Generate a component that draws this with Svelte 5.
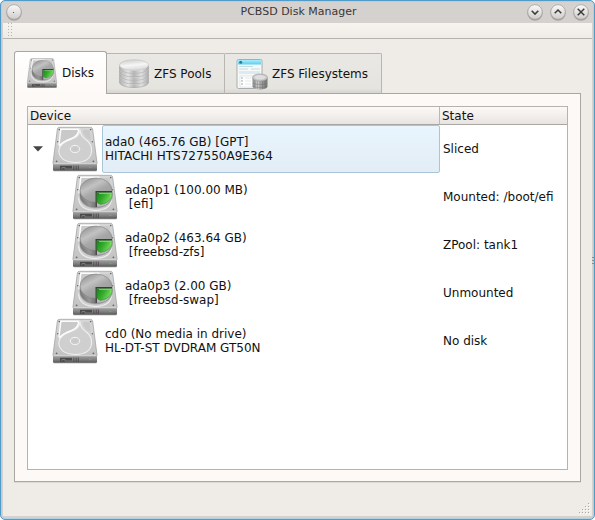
<script>
  const rows = [
    { name: 'ada0 (465.76 GB) [GPT]', detail: 'HITACHI HTS727550A9E364', state: 'Sliced', selected: true, open: true },
    { name: 'ada0p1 (100.00 MB)', detail: '\u00a0[efi]', state: 'Mounted: /boot/efi', child: true },
    { name: 'ada0p2 (463.64 GB)', detail: '\u00a0[freebsd-zfs]', state: 'ZPool: tank1', child: true },
    { name: 'ada0p3 (2.00 GB)', detail: '\u00a0[freebsd-swap]', state: 'Unmounted', child: true },
    { name: 'cd0 (No media in drive)', detail: 'HL-DT-ST DVDRAM GT50N', state: 'No disk' }
  ];
</script>

{#snippet drive(size, pie)}
  <svg width={size} height={size} viewBox="0 0 48 48">
    <path d="M2 39h44v6q0 1.500-1.500 1.500h-41Q2 46.500 2 45z" fill="#555" opacity=".35" />
    <path d="M8.500 2.300h31q1.800 0 2.100 1.700L46 37.500v1.500H2v-1.500L6.400 4q.3-1.700 2.100-1.700z" fill="url(#metal)" stroke="#9c9c9c" stroke-width=".7" />
    <path d="M2 38.800h44v5.700q0 1.300-1.300 1.300H3.300Q2 45.800 2 44.500z" fill="url(#front)" />
    <path d="M2.300 38.700h43.400" stroke="#eee" stroke-width=".7" />
    <path d="M9 40.800h12v4H9z" fill="#4a4a4a" />
    <path d="M11 44v-1.500h3V44h7" fill="none" stroke="#858585" stroke-width=".8" />
    <path d="M22.800 40.500v4.500M25.200 40.500v4.500M27.300 40.500v4.500" stroke="#4a4a4a" stroke-width=".9" />
    <path d="M38 42.500h2.600" stroke="#35d02a" stroke-width="1.200" />
    <path d="M29 4.500q0 6.500 7 11 5 4 4.500 11-1 10.500-15.500 11-16 0-17.300-11.500Q8 18 20 14.500q9-3 9-10" fill="#cfcfcf" stroke="#f0f0f0" stroke-width="1.100" />
    <path d="M9.800 4.300h17.700q.5 6.300-7 9.200-8 2.700-11.700 7l-.8-1z" fill="#c9c9c9" stroke="#fbfbfb" stroke-width="1.500" />
    <path d="M31 4.500h8l1.500 12q-9-5-9.500-12" fill="#c9c9c9" stroke="#dedede" stroke-width=".4" />
    <ellipse cx="24" cy="24" rx="4.800" ry="3.700" fill="#cecece" stroke="#f4f4f4" />
    <ellipse cx="24" cy="24" rx="2.500" ry="1.700" fill="#c8c8c8" />
    <g fill="#666">
      <circle cx="8.300" cy="4.600" r=".8" /><circle cx="39.700" cy="4.600" r=".8" />
      <circle cx="6.700" cy="16.800" r=".7" /><circle cx="41.300" cy="16.800" r=".7" />
      <circle cx="5.600" cy="36.300" r=".9" /><circle cx="42.400" cy="36.300" r=".9" />
    </g>
    {#if pie}
      <ellipse cx="25" cy="22.500" rx="16.800" ry="13" fill="#777" opacity=".4" />
      <path d="M9 17.500v4.500c0 7.500 7 12.300 16 12.300S41 29.500 41 22v-4.500z" fill="url(#side)" stroke="#777" stroke-width=".4" />
      <ellipse cx="25" cy="17.300" rx="16" ry="12.300" fill="url(#disc)" stroke="#808080" stroke-width=".6" />
      <path d="M24.700 29v5.500Q13.500 34 10 25q5 5 14.700 4z" fill="#666" opacity=".25" />
      <path d="M24.700 18.500h16.400v3.700q-.5 5.500-6 9-4.500 2.500-10.400 2.800z" fill="#b9b9b9" />
      <path d="M24.500 18h16.500v1.500H25.900v14.500h-1.400z" fill="#3c3c3c" />
      <path d="M25.800 19.800h15.300q.3 5-2.800 7.700-4 3.500-8.500 3.900-2.500-.6-4-2.300z" fill="url(#green)" stroke="#238a1c" stroke-width=".5" />
      <path d="M28 20.500h12.200q.1 2-.6 3.800" fill="none" stroke="#91e682" stroke-width=".7" />
    {/if}
  </svg>
{/snippet}

{#snippet ball(kind)}
  <svg width="18" height="18" viewBox="0 0 18 18">
    <circle cx="9" cy="10" r="7.700" fill="#918e8b" opacity=".65" />
    <circle cx="9" cy="9" r="7.300" fill="url(#ball)" stroke="#a09d9a" stroke-width=".7" />
    {#if kind === 'menu'}
      <rect x="8" y="9" width="1" height="1" fill="#555" />
    {:else}
      <path
        d={kind === 'min' ? 'M5.700 7.800l3.300 3.300 3.300-3.300' : kind === 'max' ? 'M5.700 10.300l3.300-3.300 3.300 3.300' : 'M5.700 5.700l6.600 6.600M12.300 5.700l-6.600 6.600'}
        fill="none" stroke="#3c3b3a" stroke-width="1.500" />
    {/if}
  </svg>
{/snippet}

<div class="window">
  <svg class="defs" width="0" height="0">
    <defs>
      <linearGradient id="metal" x2="0" y2="1"><stop stop-color="#d6d6d6" /><stop offset=".5" stop-color="#cdcdcd" /><stop offset="1" stop-color="#c2c2c2" /></linearGradient>
      <linearGradient id="front" x2="0" y2="1"><stop stop-color="#a2a2a2" /><stop offset=".6" stop-color="#7c7c7c" /><stop offset="1" stop-color="#555" /></linearGradient>
      <linearGradient id="side"><stop stop-color="#777" /><stop offset=".3" stop-color="#a8a8a8" /><stop offset=".5" stop-color="#757575" /><stop offset=".8" stop-color="#c5c5c5" /><stop offset="1" stop-color="#888" /></linearGradient>
      <linearGradient id="disc" x2=".7" y2="1"><stop stop-color="#858585" /><stop offset=".4" stop-color="#c2c2c2" /><stop offset=".6" stop-color="#a8a8a8" /><stop offset="1" stop-color="#999" /></linearGradient>
      <linearGradient id="green" y2=".4"><stop stop-color="#16861a" /><stop offset=".5" stop-color="#36ad2d" /><stop offset="1" stop-color="#7add62" /></linearGradient>
      <linearGradient id="ball" x2="0" y2="1"><stop stop-color="#fafafa" /><stop offset="1" stop-color="#cfcccb" /></linearGradient>
      <linearGradient id="pool"><stop stop-color="#b0b0b0" /><stop offset=".3" stop-color="#e3e3e3" /><stop offset=".5" stop-color="#b5b5b5" /><stop offset=".75" stop-color="#e0e0e0" /><stop offset="1" stop-color="#ababab" /></linearGradient>
      <linearGradient id="lid" x2=".3" y2="1"><stop stop-color="#c8c8c8" /><stop offset=".6" stop-color="#f6f6f6" /><stop offset="1" stop-color="#dcdcdc" /></linearGradient>
      <linearGradient id="can"><stop stop-color="#888" /><stop offset=".35" stop-color="#d0d0d0" /><stop offset=".65" stop-color="#999" /><stop offset="1" stop-color="#777" /></linearGradient>
      <linearGradient id="sky" x2="0" y2="1"><stop stop-color="#a9edfb" /><stop offset="1" stop-color="#54cfee" /></linearGradient>
    </defs>
  </svg>

  <header class="title">
    {@render ball('menu')}
    <span>PCBSD Disk Manager</span>
    <div class="controls">{@render ball('min')}{@render ball('max')}{@render ball('close')}</div>
  </header>

  <div class="body">
    <div class="toolbar"><i class="grip"></i></div>

    <nav class="tabs">
      <div class="tab active">{@render drive(32, true)}<span>Disks</span></div>
      <div class="tab">
        <svg width="32" height="32" viewBox="0 0 32 32">
          {#each [22, 18.500, 15, 11.500, 8] as y}
            <path d="M1.500 {y - 1}v3c0 3.300 6 5.500 14.500 5.500s14.500-2.200 14.500-5.500v-3z" fill="url(#pool)" stroke="#999" stroke-width=".5" />
            <path d="M1.800 {y - 1}c0 3 6 5 14.200 5s14.200-2 14.200-5" fill="none" stroke="#f4f4f4" stroke-width=".9" />
          {/each}
          <ellipse cx="16" cy="7" rx="14.500" ry="5.300" fill="url(#lid)" stroke="#b9b9b9" stroke-width=".5" />
        </svg>
        <span>ZFS Pools</span>
      </div>
      <div class="tab last">
        <svg width="32" height="32" viewBox="0 0 32 32">
          <rect x="1" y="1.500" width="25" height="29" rx="1.500" fill="#f7f8f8" stroke="#a1a5a6" stroke-width=".9" />
          <path d="M2 2h23v4.500H2z" fill="url(#sky)" />
          <circle cx="4.700" cy="4.300" r="1.500" fill="#257f98" />
          <path d="M3 8.500h14M3 11h9M15 11h9" stroke="#c4dde4" stroke-width="1" />
          <path d="M3 13h21v3H3z" fill="#dcebf1" />
          <path d="M4 18h20v11H4z" fill="#fff" stroke="#d5d9da" stroke-width=".6" />
          <path d="M5 20h2M5 23h2M5 26h2" stroke="#c2c6c8" stroke-width="1.500" />
          <path d="M9 20h6M9 23h6M9 26h6" stroke="#e4e6e7" stroke-width="1" />
          <path d="M16.500 20v8.500c0 4 15 4 15 0V20z" fill="url(#can)" />
          <path d="M19 22v8M21.500 23v8M24 23v8.500M26.500 23v8M29 22v8M17 25c3 2 11 2 14 0M17 28c3 2 11 2 14 0" fill="none" stroke="#666" stroke-width=".6" opacity=".6" />
          <ellipse cx="24" cy="19.500" rx="7.600" ry="3.500" fill="#c9c9c9" stroke="#9a9a9a" stroke-width=".6" />
          <ellipse cx="24" cy="19.300" rx="5.600" ry="2.200" fill="#dedede" />
        </svg>
        <span>ZFS Filesystems</span>
      </div>
    </nav>

    <main class="panel">
      <section class="tree">
        <div class="head"><div class="c1">Device</div><div class="c2">State</div></div>
        {#each rows as row}
          <div class="row">
            <div class="device" class:child={row.child}>
              <span class="branch">
                {#if row.open}<svg width="10" height="6" viewBox="0 0 10 6"><path d="M0 .3h10L5 5.500z" fill="#464442" /></svg>{/if}
              </span>
              {@render drive(48, row.child)}
              <div class="label" class:selected={row.selected}>
                <div>{row.name}</div>
                <div>{row.detail}</div>
              </div>
            </div>
            <div class="state">{row.state}</div>
          </div>
        {/each}
      </section>
    </main>
    <footer>
      <svg width="11" height="11" viewBox="0 0 11 11" shape-rendering="crispEdges">
        {#each [[9, 0], [6, 3], [9, 3], [3, 6], [6, 6], [9, 6], [0, 9], [3, 9], [6, 9], [9, 9]] as [x, y]}
          <rect x={x + 1} y={y + 1} width="1" height="1" fill="#fff" />
          <rect {x} {y} width="1" height="1" fill="#aaa6a2" />
        {/each}
      </svg>
    </footer>
  </div>
  <i class="handle"></i>
</div>

<style>
  :global(body) { background: #fff; }
  * { box-sizing: border-box; }
  svg { display: block; flex: none; }
  .defs { position: absolute; }
  .window {
    position: relative;
    width: 595px;
    height: 520px;
    border: 1px solid #519bc9;
    border-radius: 5px;
    background: #d5d1ce;
    padding: 0 2px 3px;
    display: flex;
    flex-direction: column;
    font: 12px/14px "DejaVu Sans", sans-serif;
    color: #111;
    overflow: hidden;
    box-shadow: inset 0 0 0 1px #b5cfdd;
  }
  .title {
    height: 22px;
    flex: none;
    display: flex;
    justify-content: space-between;
    align-items: center;
    padding: 0 2.5px 0 1.5px;
    font-size: 11px;
    color: #3b3735;
  }
  .title > span { margin-left: 49px; }
  .controls { display: flex; gap: 5px; }
  .body {
    flex: 1;
    display: flex;
    flex-direction: column;
    background: #efebe7;
    min-height: 0;
  }
  .toolbar {
    height: 16px;
    flex: none;
    border-bottom: 1px solid #b8b3af;
    background: linear-gradient(#f7f3ef, #efebe7);
    padding-left: 5px;
  }
  .grip {
    display: block;
    width: 6px;
    height: 15px;
    background: radial-gradient(circle at .5px .5px, #b9b5b1 .6px, transparent .8px) 0 0 / 3px 3px;
  }
  .tabs {
    height: 43px;
    flex: none;
    margin: 12px 0 0 11px;
    display: flex;
    align-items: flex-end;
    position: relative;
    z-index: 1;
  }
  .tab {
    width: 118px;
    height: 41px;
    display: flex;
    align-items: center;
    gap: 4px;
    padding: 0 0 0 11px;
    border: 1px solid #b9b5b1;
    border-left: 0;
    border-bottom-color: #aaa6a2;
    border-radius: 0 2px 0 0;
    background: linear-gradient(#eae8e4, #e5e4df 88%, #d7d5d1);
  }
  .tab.active {
    width: 93px;
    height: 43px;
    padding-left: 11px;
    border: 1px solid #aaa6a2;
    border-bottom: 0;
    border-radius: 3px 3px 0 0;
    background: linear-gradient(#fff, #fdf9f6);
    padding-bottom: 1px;
  }
  .tab.last { width: 157px; }
  .panel {
    width: 567px;
    height: 389px;
    flex: none;
    margin: -1px 0 0 11px;
    padding: 12px;
    border: 1px solid #aaa6a2;
    background: #fdf9f6;
    box-shadow: 0 1px #dedad6;
  }
  .tree {
    width: 541px;
    height: 364px;
    border: 1px solid #b5b2af;
    background: #fff;
  }
  .head {
    height: 18px;
    display: flex;
    border-bottom: 1px solid #aaa6a2;
    background: linear-gradient(#fdf9f6, #e8e4e1);
    line-height: 18px;
  }
  .c1 { width: 412px; height: 17px; padding-left: 2px; border-right: 1px solid #bbb7b4; }
  .c2 { padding-left: 2px; }
  .row { height: 48px; display: flex; }
  .device { width: 412px; display: flex; align-items: stretch; }
  .branch { width: 23px; padding: 21px 0 0 5px; }
  .child .branch { width: 43px; }
  .label {
    flex: 1;
    margin-left: 3px;
    padding: 9px 0 0 2px;
    border: 1px solid transparent;
    border-radius: 2px;
    white-space: nowrap;
  }
  .label.selected {
    border-color: #a9c5d8;
    background: linear-gradient(#e9f5fe, #e2edf5);
  }
  .state { padding: 17px 0 0 3px; }
  footer {
    flex: 1;
    display: flex;
    justify-content: flex-end;
    align-items: flex-end;
    padding: 0 2px 2px 0;
  }
  .handle {
    position: absolute;
    right: 0;
    top: 256px;
    width: 2px;
    height: 8px;
    background: repeating-linear-gradient(#8c8c8c 0 1px, transparent 1px 3px);
  }
</style>
